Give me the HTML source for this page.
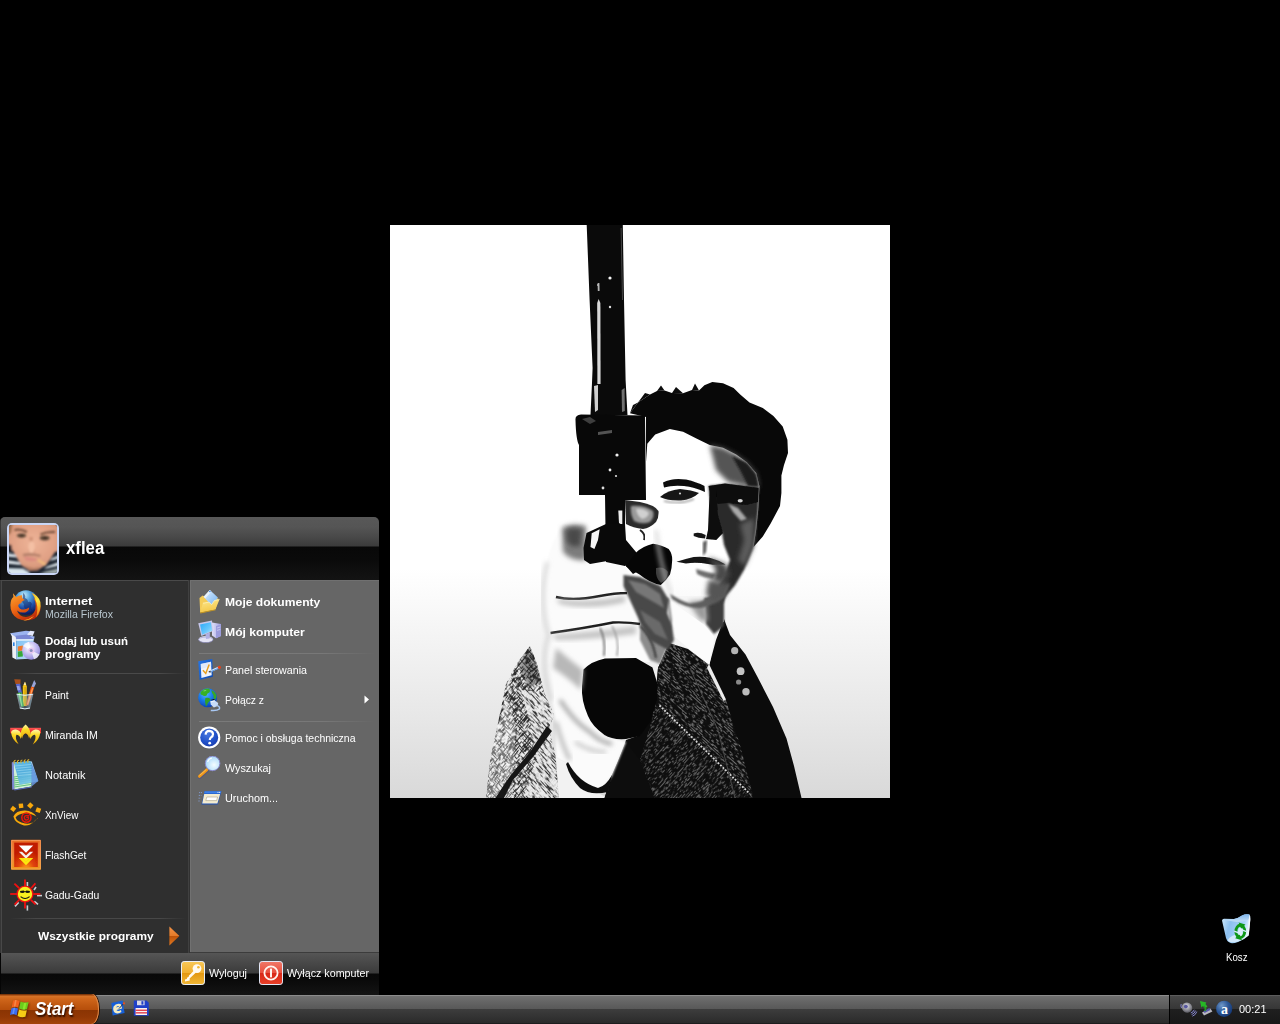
<!DOCTYPE html>
<html>
<head>
<meta charset="utf-8">
<title>Desktop</title>
<style>
html,body{margin:0;padding:0;}
body{width:1280px;height:1024px;overflow:hidden;position:relative;background:#000;font-family:"Liberation Sans",sans-serif;font-size:11px;color:#fff;}
.abs{position:absolute;}
svg{display:block;}
#photo{position:absolute;left:390px;top:225px;width:500px;height:573px;}
/* start menu: page coords via wrapper at 0,0 */
#sm{position:absolute;left:0;top:0;width:1280px;height:1024px;pointer-events:none;}
#smbox{position:absolute;left:0px;top:517px;width:379px;height:478px;border-radius:5px 5px 0 0;overflow:hidden;background:#0d0d0d;}
#smhead{position:absolute;left:0;top:0;width:379px;height:63px;background:linear-gradient(to bottom,#585858 0px,#555 10px,#4a4a4a 19px,#3b3b3b 29px,#080808 30px,#0a0a0a 42px,#131313 62px,#131313 63px);box-shadow:inset 1px 0 0 rgba(0,0,0,0.35);}
#smleft{position:absolute;left:0px;top:63px;width:188px;height:373px;background:#2f2f2f;border-top:1px solid #4a4a4a;border-left:1px solid #363636;box-sizing:border-box;box-shadow:inset 1px 0 0 #484848;}
#smdiv{position:absolute;left:188px;top:63px;width:2px;height:373px;background:linear-gradient(to right,#404040 0,#404040 1px,#323232 1px,#323232 2px);}
#smright{position:absolute;left:190px;top:63px;width:189px;height:373px;background:#666666;border-top:1px solid #707070;border-bottom:1px solid #3c3c3c;box-sizing:border-box;box-shadow:inset 1px 0 0 #717171;}
#smfoot{position:absolute;left:0;top:436px;width:379px;height:42px;background:linear-gradient(to bottom,#565656 0px,#505050 4px,#3b3b3b 20px,#080808 21px,#090909 26px,#141414 42px);box-shadow:inset 1px 0 0 #050505;}
.t{position:absolute;white-space:nowrap;line-height:13px;height:13px;color:#fff;font-size:11px;transform-origin:0 50%;}
.b{font-weight:bold;}
.sep{position:absolute;height:1px;}
.ic{position:absolute;}
/* taskbar */
#tb{position:absolute;left:0;top:995px;width:1280px;height:29px;background:linear-gradient(to bottom,#8c8c8c 0px,#8c8c8c 1px,#707070 1px,#6a6a6a 4px,#585858 14px,#3d3d3d 14px,#2b2b2b 28px,#1e1e1e 28px,#1e1e1e 29px);}
#tray{position:absolute;left:1169px;top:0;width:111px;height:29px;background:linear-gradient(to bottom,#5c5c5c 0px,#5c5c5c 1px,#474747 1px,#363636 14px,#1f1f1f 14px,#181818 29px);border-left:1px solid #000;box-sizing:border-box;}
#startbtn{position:absolute;left:-14px;top:-1px;width:113px;height:30px;border-radius:0 7px 7px 0 / 0 15px 15px 0;background:linear-gradient(to bottom,#5e2604 0px,#a04a12 1px,#d67226 2.5px,#cf661b 5px,#c05811 11px,#b64e0b 16px,#8a3403 16px,#923805 23px,#a2440a 30px);overflow:hidden;box-shadow:inset -1px 0 0 #e28a48, 1px 0 0 #2a1204;}
</style>
</head>
<body>

<!-- PHOTO -->
<svg id="photo" viewBox="390 225 500 573">
<defs>
<linearGradient id="pbg" x1="0" y1="0" x2="0" y2="1">
<stop offset="0" stop-color="#ffffff"/><stop offset="0.6" stop-color="#ffffff"/><stop offset="0.72" stop-color="#f4f4f4"/><stop offset="0.86" stop-color="#e7e7e7"/><stop offset="1" stop-color="#d9d9d9"/>
</linearGradient>
<filter id="bl05" x="-10%" y="-10%" width="120%" height="120%"><feGaussianBlur stdDeviation="0.6"/></filter>
<filter id="bl1" x="-20%" y="-20%" width="140%" height="140%"><feGaussianBlur stdDeviation="1.2"/></filter>
<filter id="bl2" x="-20%" y="-20%" width="140%" height="140%"><feGaussianBlur stdDeviation="2.5"/></filter>
<filter id="bl4" x="-30%" y="-30%" width="160%" height="160%"><feGaussianBlur stdDeviation="4"/></filter>
<pattern id="tweedD" width="7" height="7" patternUnits="userSpaceOnUse" patternTransform="rotate(40)"><rect width="7" height="7" fill="#111"/><path d="M0 1.2H7M0 4.6H7" stroke="#505050" stroke-width="0.9"/></pattern>
<pattern id="tweedD2" width="7" height="7" patternUnits="userSpaceOnUse" patternTransform="rotate(-50)"><rect width="7" height="7" fill="#121212"/><path d="M0 1.2H7M0 4.6H7" stroke="#4a4a4a" stroke-width="0.9"/></pattern>
<pattern id="tweedL" width="5" height="5" patternUnits="userSpaceOnUse" patternTransform="rotate(-55)"><rect width="5" height="5" fill="#ececec"/><path d="M0 1H5M0 3.5H5" stroke="#4a4a4a" stroke-width="0.85"/></pattern>
<pattern id="tweedL2" width="5" height="5" patternUnits="userSpaceOnUse" patternTransform="rotate(50)"><rect width="5" height="5" fill="#f0f0f0"/><path d="M0 1H5M0 3.5H5" stroke="#5a5a5a" stroke-width="0.8"/></pattern>
<linearGradient id="slv" x1="0" y1="0" x2="0" y2="1"><stop offset="0" stop-color="#fff" stop-opacity="0"/><stop offset="1" stop-color="#fff" stop-opacity="0.35"/></linearGradient>
<filter id="spk" x="0" y="0" width="100%" height="100%"><feTurbulence type="fractalNoise" baseFrequency="0.11 0.75" numOctaves="2" seed="7" result="n"/><feColorMatrix in="n" type="matrix" values="0 0 0 0 0  0 0 0 0 0  0 0 0 0 0  7 0 0 0 -3.55" result="a"/><feComposite in="SourceGraphic" in2="a" operator="in"/></filter>
<filter id="spk2" x="0" y="0" width="100%" height="100%"><feTurbulence type="fractalNoise" baseFrequency="0.13 0.8" numOctaves="2" seed="23" result="n"/><feColorMatrix in="n" type="matrix" values="0 0 0 0 0  0 0 0 0 0  0 0 0 0 0  7 0 0 0 -3.4" result="a"/><feComposite in="SourceGraphic" in2="a" operator="in"/></filter>
<filter id="spk3" x="0" y="0" width="100%" height="100%"><feTurbulence type="fractalNoise" baseFrequency="0.2 0.95" numOctaves="2" seed="11" result="n"/><feColorMatrix in="n" type="matrix" values="0 0 0 0 0  0 0 0 0 0  0 0 0 0 0  7 0 0 0 -3.65" result="a"/><feComposite in="SourceGraphic" in2="a" operator="in"/></filter>
<clipPath id="cLap"><path d="M669,643 L688,649 L709,665 L726,700 L740,745 L754,800 L655,800 L640,760 L652,720 L657,684 L658,668 Z"/></clipPath>
<clipPath id="cSlv"><path d="M530,646 L537,664 L544,692 L554,715 L549,728 L556,758 L559,800 L486,800 L490,761 L497,728 L506,684 L518,662 Z"/></clipPath>
<clipPath id="cLap2"><path d="M655,800 L640,760 L652,720 L660,705 L750,795 L752,800 Z"/></clipPath>
<clipPath id="pclip"><rect x="390" y="225" width="500" height="573"/></clipPath>
</defs>
<rect x="390" y="225" width="500" height="573" fill="url(#pbg)"/>
<g id="figure" clip-path="url(#pclip)">
<!-- left sleeve light tweed -->
<g clip-path="url(#cSlv)">
<rect x="480" y="640" width="90" height="165" fill="#ededed"/>
<rect x="380" y="560" width="320" height="320" fill="#2a2a2a" filter="url(#spk2)" transform="rotate(-52 525 720)"/>
<g opacity="0.9"><path d="M520,690 L544,692 L554,715 L549,728 L556,758 L559,800 L522,800 L536,760 L530,720 Z" fill="#ededed"/>
<g clip-path="none"><rect x="380" y="560" width="320" height="320" fill="#2a2a2a" filter="url(#spk)" transform="rotate(48 540 745)" clip-path="none"/></g></g>
<path d="M530,646 L537,664 L541,682 L528,688 L519,664 Z" fill="#1c1c1c" opacity="0.4" filter="url(#bl1)"/>
<path d="M486,800 L490,761 L497,728 L506,700 L516,724 L512,800 Z" fill="#fff" opacity="0.3"/>
</g>
<path d="M547,726 L552,731 L533,757 L513,780 L503,800 L494,800 L510,776 L530,752 Z" fill="#161616" filter="url(#bl05)"/>
<!-- shirt cuff -->
<path d="M556,758 L568,764 L584,786 L604,796 L606,800 L559,800 Z" fill="#f2f2f2"/>
<!-- jacket: black body -->
<path d="M724,619 L730,635 L745.5,654.5 L757,676 L773,707 L786.5,738.5 L794,766 L802,800 L604,800 L611,777 L618,761 L626,740 L640,735 L655,700 L658,668 L669,643 L690,655 L709,666 L716,640 Z" fill="#0b0b0b"/>
<!-- tweed lapel -->
<g clip-path="url(#cLap)">
<rect x="630" y="640" width="130" height="165" fill="#0e0e0e"/>
<rect x="540" y="560" width="320" height="320" fill="#6e6e6e" filter="url(#spk3)" transform="rotate(42 700 720)"/>
<path d="M655,800 L640,760 L652,720 L660,705 L750,795 L752,800 Z" fill="#0e0e0e"/>
</g>
<g clip-path="url(#cLap)"><g clip-path="url(#cLap2)"><rect x="540" y="600" width="320" height="320" fill="#626262" filter="url(#spk3)" transform="rotate(-48 700 760)"/></g></g>
<path d="M604,800 L611,777 L618,761 L626,742 L640,760 L655,800 Z" fill="#0d0d0d"/>
<!-- lapel seam -->
<path d="M659.5,705.5 L749.5,793.5" stroke="#d8d8d8" stroke-width="1.8" stroke-dasharray="1.8 1.6" fill="none"/>
<path d="M690,668 L718,730 L735,798" stroke="#4a4a4a" stroke-width="1" fill="none"/>
<!-- tie pins -->
<g filter="url(#bl05)"><circle cx="734.7" cy="650.7" r="3.6" fill="#b4b4b4"/><circle cx="740.6" cy="671.2" r="3.9" fill="#c4c4c4"/><circle cx="738.6" cy="682" r="2.6" fill="#8a8a8a"/><circle cx="746" cy="691.8" r="3.7" fill="#bcbcbc"/></g>
<!-- neck -->
<path d="M669,596 L724,596 L724,622 L704,626 L672,604 Z" fill="#f6f6f6"/>
<path d="M704,598 L724,596 L724,626 L714,634 L706,624 Z" fill="#3c3c3c" filter="url(#bl1)"/>
<path d="M688,602 L706,600 L708,622 L700,620 Z" fill="#9a9a9a" filter="url(#bl2)"/>
<!-- shirt collar white -->
<path d="M671,601 L704.5,625 L714.5,637 L709.5,664.5 L689,649 L675,637 L667,617 Z" fill="#fcfcfc"/>
<path d="M709,664 L726,699.5 L723.5,701 L707,668 Z" fill="#ececec"/>
<!-- hand white base -->
<path d="M563,524 Q552,540 547,562 Q538,600 549,636 Q540,660 552,700 L556,722 L556,758 L568,764 L584,786 L600,792 L612,776 L626,742 L604,735 L583,700 L583.5,669.5 L605,658.5 L640,657 L650,640 L640,600 L626,566 L606,562 L586,560 L584,540 L586,526 Z" fill="#fbfbfb" filter="url(#bl1)"/>
<path d="M552,640 L600,600 L640,600 L660,640 L650,662 L600,660 L580,680 L560,700 Z" fill="#fbfbfb"/>
<!-- hand: lower fingers gray (pinky/ring) -->
<path d="M640,598 L669,598 L672,620 L669,643 L660,664 L650,660 L640,640 Z" fill="#8c8c8c" filter="url(#bl1)"/>
<path d="M645,606 Q660,615 668,640" stroke="#2a2a2a" stroke-width="2" fill="none" filter="url(#bl1)"/>
<path d="M640,626 Q652,636 656,658" stroke="#333" stroke-width="2" fill="none" filter="url(#bl1)"/>
<path d="M650,600 L668,600 L670,622 L660,612 Z" fill="#dcdcdc" filter="url(#bl1)"/>
<!-- grip bottom black -->
<path d="M583.5,669.5 Q592,661 605,658.5 L636,658 L652.5,667.5 L657.5,684 L657,700 L650,722 L640,736 L626,739 Q612,740 604.5,735 Q592,726 588,716 Q581,700 582,686 Z" fill="#060606"/>
<!-- wrist shadow curve -->
<path d="M568,762 Q578,782 598,788 Q606,786 612,775 L608,792 Q590,796 580,788 Q570,778 566,764 Z" fill="#111" filter="url(#bl05)"/>
<!-- hand shading -->
<path d="M556,648 Q570,660 583,670 L581,690 Q566,676 553,668 Z" fill="#b8b8b8" filter="url(#bl2)"/>
<path d="M560,700 Q574,722 590,732 Q600,742 612,744" stroke="#8a8a8a" stroke-width="3" fill="none" filter="url(#bl2)"/>
<path d="M556,722 Q562,745 570,760" stroke="#aaa" stroke-width="3" fill="none" filter="url(#bl2)"/>
<path d="M575,742 Q590,752 606,752" stroke="#b0b0b0" stroke-width="2.5" fill="none" filter="url(#bl2)"/>
<!-- finger diagonal dark band -->
<path d="M623.5,575 L640,577 L660.5,586 L669,600 L667,613 L672,626 L674,640 L668,650 L650,640 L640,622 L629,598 L623.5,586 Z" fill="#4a4a4a" filter="url(#bl1)"/>
<path d="M628,580 L645,584 L660,594 L664,608 L650,600 L636,592 Z" fill="#777" filter="url(#bl1)"/>
<path d="M640,610 L660,622 L668,640 L655,634 L645,622 Z" fill="#6a6a6a" filter="url(#bl1)"/>
<!-- finger separators -->
<path d="M556,597 Q573,601.5 600,596 Q615,593 627,593" stroke="#1e1e1e" stroke-width="2.4" fill="none" filter="url(#bl05)"/>
<path d="M550.5,633 Q586,628 613,622.5 Q628,622 640,624" stroke="#1e1e1e" stroke-width="2.4" fill="none" filter="url(#bl05)"/>
<path d="M556,599 Q590,604 625,596 L625,602 Q590,610 560,604 Z" fill="#bdbdbd" filter="url(#bl2)"/>
<path d="M552,635 Q590,632 636,626 L636,634 Q590,640 556,640 Z" fill="#c4c4c4" filter="url(#bl2)"/>
<path d="M600,628 Q606,640 604,656" stroke="#777" stroke-width="1.8" fill="none" filter="url(#bl1)"/>
<path d="M612,626 Q620,640 617,656" stroke="#999" stroke-width="1.5" fill="none" filter="url(#bl1)"/>
<!-- hand left outline faint -->
<path d="M547,562 Q538,600 549,636 Q540,660 552,700" stroke="#c4c4c4" stroke-width="2.5" fill="none" filter="url(#bl2)"/>
<!-- trigger finger fuzzy -->
<path d="M562,528 Q572,522 586,526 L586,560 Q572,562 563,552 Z" fill="#7c7c7c" filter="url(#bl2)"/>
<path d="M566,530 Q574,526 582,530 L580,546 Q572,548 567,542 Z" fill="#4a4a4a" filter="url(#bl2)"/>
<!-- gun: barrel -->
<path d="M586.7,225 L622.8,225 L624,300 L625.6,380 L627.5,415 L590.5,415 L592,383 L592.6,368 L589.6,300 Z" fill="#0a0a0a"/>
<path d="M598.6,299 L600.4,303 L600.6,384 L597.4,384 L597.2,303 Z" fill="#f0f0f0" opacity="0.9"/>
<path d="M597.6,283 L599.4,283 L599.6,291 L597.8,291 Z" fill="#ddd" opacity="0.8"/>
<path d="M620.6,228 L621.6,228 L623,300 L622,300 Z" fill="#555" opacity="0.8"/>
<path d="M594,386 L598,385 L598,410 L595,412 Z" fill="#f2f2f2" opacity="0.85"/>
<path d="M621.6,390 L624.6,388 L624.8,411 L622,412 Z" fill="#8a8a8a" opacity="0.8"/>
<!-- gun: cylinder + frame -->
<path d="M575.5,420 Q575,415 581,414.5 L645,415.5 L646,500 L625,500 L625,566 L606,562 L605,495 L579,495 L579,445 Q576,440 575.5,420 Z" fill="#080808"/>
<path d="M582,419 L590,417 L596,421 L590,424 Z" fill="#555" opacity="0.7"/>
<path d="M598,432 L612,430 L612,433 L598,435 Z" fill="#666" opacity="0.8"/>
<circle cx="610" cy="278" r="1.6" fill="#f4f4f4"/><circle cx="610" cy="307" r="1.2" fill="#e0e0e0"/><circle cx="598" cy="285" r="1" fill="#bbb"/>
<circle cx="617" cy="455" r="1.6" fill="#f0f0f0"/><circle cx="610" cy="470" r="1.4" fill="#f0f0f0"/><circle cx="616" cy="476" r="1.1" fill="#ddd"/><circle cx="603" cy="488" r="1.4" fill="#ddd"/>
<path d="M618.3,510.5 L622.3,510.5 L622.3,525 L619,523 Z" fill="#eee"/>
<!-- trigger guard -->
<path d="M606,524 L586.5,533 L583.5,548 L584,560 L590,564 L613,560 L626,566 L633,574 L640,570 L636,552 L626,540 L625,524 Z" fill="#090909"/>
<path d="M591.7,533.2 L599.7,529.2 L598,540 L594.4,549.1 L590.5,547 Z" fill="#f6f6f6"/>
<!-- thumb -->
<path d="M625,500 L640,502 Q655,505 658.5,511 Q659,518 656,522 Q650,528 643,529 Q633,528 626,524 Z" fill="#2c2c2c" filter="url(#bl05)"/>
<path d="M631,506 Q645,505 653,511 Q655,517 650,522 Q642,525 634,521 Q630,514 631,506 Z" fill="#9a9a9a" filter="url(#bl1)"/>
<path d="M636,509 Q644,508 649,513 Q648,518 642,519 Q637,516 636,509 Z" fill="#d0d0d0" filter="url(#bl1)"/>
<path d="M640,530 Q646,534 644,540" stroke="#222" stroke-width="2" fill="none" filter="url(#bl05)"/>
<!-- fingertip black blob -->
<path d="M626,566.5 L635.5,553 Q643,546 653,543.8 Q662,545 668.7,549 Q672.5,554 672.2,560 Q672,568 670,574.5 Q666,581 660.8,585 Q650,583 639.5,574.5 Z" fill="#060606"/>
<path d="M656,568 Q664,566 668,572 Q667,580 661,583 Q655,578 656,568 Z" fill="#3c3c3c" filter="url(#bl05)"/>
<!-- hair -->
<path d="M630,413.2 L638,402.6 L650,394.6 L657,391 L664.5,390.6 L672,393 L683,393.3 L692,390 L699,390.6 L704.4,385.3 L712.3,382 L723,383.3 L733.6,388 L740.2,394.6 L749.5,402.6 L762.8,407.9 L773.4,415.9 L782.7,426.5 L787.4,439.8 L788,453 L784,465 L781.4,475.6 L781.4,492.9 L780,506 L770.8,523.2 L762.8,536.5 L753.5,547.1 L756.2,529.8 L758.2,510 L758.8,499.5 L759.5,486.2 L756.2,473 L746.9,462.3 L736.2,454.4 L723,447.7 L709.7,445.1 L696.4,438.4 L683.1,431.8 L669.8,429.1 L655.2,434.4 L647.3,443.7 L646,462 L646,417 Z" fill="#080808"/>
<!-- hair wisps -->
<path d="M638,402.6 L645,393 L650,394.6 Z M657,391 L661,385.5 L664.5,390.6 Z M692,390 L695,383.5 L699,390.6 Z M672,393 L676,387 L683,393.3 Z M630,413.2 L633,405 L638,402.6 Z" fill="#0c0c0c"/>
<!-- forehead right shade -->
<path d="M709.7,445.1 L723,447.7 L736.2,454.4 L746.9,462.3 L756.2,473 L759.5,486.2 L745,486 L728,482 L716,470 Z" fill="#555" filter="url(#bl2)"/>
<path d="M732,456 L747,463 L756,474 L759,487 L748,486 L740,470 Z" fill="#1a1a1a" filter="url(#bl1)"/>
<!-- right face shadow big -->
<path d="M708.5,486 L725,484 L759.5,487 L758.8,499.5 L758.2,510 L756.2,529.8 L753.5,547 L744.2,569.7 L734.9,585.6 L725.6,596.2 L723,603 L716,592 L724,575 L730,560 L724,545 L722,533 L716,529 L712,515 Z" fill="#2b2b2b" filter="url(#bl1)"/>
<!-- right eye dark band -->
<path d="M708.5,486 L725,483.5 L758.5,488 L758,502 L746,505 L728,503 L713,504 Z" fill="#0a0a0a" filter="url(#bl05)"/>
<ellipse cx="740.2" cy="500.8" rx="2.6" ry="1.8" fill="#d8d8d8" filter="url(#bl05)"/>
<!-- cheek lighter streak -->
<path d="M728,503.5 L738,508 L747,519 L741,521 L733,512 Z" fill="#a8a8a8" filter="url(#bl1)"/>
<!-- cheek mid -->
<path d="M740,524 L754,518 L753.5,546 L745,566 L738,560 L744,540 Z" fill="#5c5c5c" filter="url(#bl2)"/>
<!-- nose shadow -->
<path d="M709.7,489 L716,489 L718,515 L723,533 L716.3,540 L706,539 L708,530 Z" fill="#0c0c0c" filter="url(#bl05)"/>
<path d="M693.7,533.5 Q699,531.5 705.7,535 L705,538.5 Q698,538 693.7,536 Z" fill="#151515" filter="url(#bl05)"/>
<path d="M703,542 L707,540 L706,552 L703,556 Z" fill="#555" filter="url(#bl1)"/>
<!-- left eye + brow -->
<path d="M663,482.5 Q672,477.5 686,479.5 Q697,482 704.5,486 L705,492 Q694,487 684,486 Q672,485 664,487.5 Z" fill="#0e0e0e" filter="url(#bl05)"/>
<path d="M660,497 Q668,490 680,489 Q692,490 699,493 Q692,499.5 681,500.5 Q668,501 660,497 Z" fill="#161616" filter="url(#bl05)"/>
<path d="M664,501 Q680,505 694,499" stroke="#999" stroke-width="1.5" fill="none" filter="url(#bl1)"/>
<circle cx="680" cy="493.5" r="1.1" fill="#ccc"/>
<!-- mouth -->
<path d="M676.5,561.7 Q685,559 693.7,557 Q702,556 709.7,557.7 Q718,560 725.6,564.4 Q716,565.5 708,564 Q696,562 686,563.5 Z" fill="#141414" filter="url(#bl05)"/>
<path d="M696,569 Q706,572 716,574 L713,579 Q704,578 697,574 Z" fill="#6e6e6e" filter="url(#bl1)"/>
<path d="M708,557 L726,564 L730,575 L722,584 L712,580 L716,570 Z" fill="#4a4a4a" filter="url(#bl2)"/>
<!-- chin/jaw shadow -->
<path d="M669.8,593.6 Q680,601 690,603.5 Q700,603 708,598 Q718,590 729.6,583 L725,597 Q712,606 700,608 Q684,608 672,599 Z" fill="#5e5e5e" filter="url(#bl1)"/>
<path d="M708.4,580 L729.6,583 L724,598 L712,602 L706,594 Z" fill="#555" filter="url(#bl2)"/>
<path d="M656,530 Q660,565 671,594" stroke="#cfcfcf" stroke-width="2.5" fill="none" filter="url(#bl2)"/>

</g>
</svg>

<!-- DESKTOP ICON -->
<svg class="abs" style="left:1220px;top:912px;" width="32" height="32" viewBox="0 0 32 32">
<defs><linearGradient id="kog" x1="0" y1="0" x2="1" y2="0.3"><stop offset="0" stop-color="#d4ecfc"/><stop offset="0.35" stop-color="#8cc0f0"/><stop offset="0.8" stop-color="#a8d4f8"/><stop offset="1" stop-color="#e8f4fc"/></linearGradient>
<linearGradient id="kog2" x1="0" y1="0" x2="0" y2="1"><stop offset="0" stop-color="#7cb4ec"/><stop offset="1" stop-color="#c4e0f8"/></linearGradient>
<filter id="kob"><feGaussianBlur stdDeviation="0.35"/></filter></defs>
<g filter="url(#kob)">
<path d="M2,8.6 Q2.4,7 4,6.8 L14,7 Q19,5.6 22,3.4 Q26,1.4 29.4,2.6 Q30.6,4 30.4,7 L28.8,23.6 Q24,28 18,30 Q12,32 9.6,30.6 Q6.6,29 6,26 Z" fill="url(#kog)"/>
<path d="M14,7 Q19,5.6 22,3.4 Q26,1.4 29.4,2.6 Q29.6,6 28,8 Q22,10.4 14,9.4 Q6,9 4,7 Z" fill="url(#kog2)"/>
<ellipse cx="17" cy="26" rx="9.4" ry="3.6" transform="rotate(-16 17 26)" fill="#d8ecfc" opacity="0.9"/>
<path d="M29.4,3 Q30.4,5 30.2,8 L28.6,23.4 Q28,18 28.6,10 Z" fill="#f4f8fc"/>
<ellipse cx="20.3" cy="19.4" rx="4.4" ry="6.2" fill="none" stroke="#109818" stroke-width="2.9"/>
<path d="M18.6,10.6 L25.4,12.6 L21.2,17 Z" fill="#109818"/>
<path d="M22,28.2 L15.2,26.2 L19.4,21.8 Z" fill="#109818"/>
<path d="M21.4,17.6 L26.4,19.6" stroke="#d8ecfc" stroke-width="1.3"/>
<path d="M19.2,21.2 L14.2,19.2" stroke="#d8ecfc" stroke-width="1.3"/>
<ellipse cx="20.3" cy="19.4" rx="2.2" ry="3.6" fill="#e4f2fc" opacity="0.85"/>
</g>
</svg>
<div class="t" style="transform:scaleX(0.8787);left:1225.5px;top:951px;">Kosz</div>

<!-- START MENU -->
<div id="sm">
<div id="smbox">
  <div id="smhead"></div>
  <div id="smleft"></div>
  <div id="smdiv"></div>
  <div id="smright"></div>
  <div id="smfoot"></div>
</div>
<!-- separators -->
<div class="sep" style="left:10px;top:673px;width:176px;background:linear-gradient(to right,#2f2f2f,#4a4a4a 15%,#4a4a4a 85%,#2f2f2f);"></div>
<div class="sep" style="left:10px;top:918px;width:176px;background:linear-gradient(to right,#2f2f2f,#484848 15%,#484848 85%,#2f2f2f);"></div>
<div class="sep" style="left:199px;top:653px;width:176px;background:linear-gradient(to right,#7a7a7a,#787878 70%,#666);"></div>
<div class="sep" style="left:199px;top:721px;width:176px;background:linear-gradient(to right,#7a7a7a,#787878 70%,#666);"></div>
<!-- avatar -->
<div id="avatar" class="abs" style="left:7px;top:523px;width:52px;height:52px;border-radius:5px;background:#c9d6f6;overflow:hidden;">
<svg class="abs" style="left:2px;top:2px;border-radius:2px;" width="48" height="48" viewBox="0 0 48 48">
<defs><filter id="ab"><feGaussianBlur stdDeviation="1.3"/></filter><filter id="ab2"><feGaussianBlur stdDeviation="0.8"/></filter>
<radialGradient id="avs" cx="0.5" cy="0.42" r="0.7"><stop offset="0" stop-color="#eeb498"/><stop offset="0.6" stop-color="#e0a084"/><stop offset="1" stop-color="#c98a6c"/></radialGradient>
<clipPath id="avc"><rect width="48" height="48"/></clipPath></defs>
<g clip-path="url(#avc)">
<rect width="48" height="48" fill="#1c2430"/>
<g filter="url(#ab)">
<path d="M-3,-3 L51,-3 L51,26 L46,27 L38,39 L29,45 L20,45.5 L12,40 L2.5,23.5 L-3,20 Z" fill="url(#avs)"/>
<path d="M-3,-3 L4,-3 L2,8 L-3,12 Z" fill="#a07050"/>
<path d="M-3,19 L2.5,20 L3,27 L-3,27 Z" fill="#22242c"/>
<path d="M-3,28 L6,29.5 L8,32.5 L-3,31.5 Z" fill="#dfe7ee"/>
<path d="M-3,35 L10,37 L12,40 L-3,38.5 Z" fill="#e4ecf2"/>
<path d="M-3,43 L14,43.5 L19,46.5 L22,50 L-3,50 Z" fill="#d8e6ee"/>
<path d="M50,30 L43,33 L41,36 L50,33.5 Z" fill="#c8d0d6"/>
<path d="M50,37 L38,41.5 L35,44 L50,40.5 Z" fill="#dde5ea"/>
<path d="M50,43 L36,46.5 L30,49 L50,49 Z" fill="#9aa6a6"/>
<path d="M20,12 Q22,20 19,26 Q22,28 26,27 Q23,20 24,12 Z" fill="#c8886c" opacity="0.7"/>
<ellipse cx="22.5" cy="22" rx="3.2" ry="6" fill="#f4c0a4"/>
<path d="M13.5,29 Q22,26.5 32,30 L31,32 Q22,30 14.5,31.5 Z" fill="#b4806a"/>
<path d="M14.7,32 Q22,31 30,34.4 Q24,37.4 17,35.4 Z" fill="#dc8c80"/>
<path d="M15,40 Q22,45 31,42 L29,45.5 L20,46 Z" fill="#b07a62"/>
</g>
<g filter="url(#ab2)">
<path d="M5.5,5 Q11,3.4 17.8,7" stroke="#6e4c38" stroke-width="2" fill="none"/>
<path d="M31.5,9.4 Q38,6.4 46,7" stroke="#6e4c38" stroke-width="2" fill="none"/>
<ellipse cx="12.5" cy="10.6" rx="4.6" ry="2.1" fill="#5e4a38"/>
<ellipse cx="35.7" cy="13.1" rx="5" ry="2.3" fill="#5e4a38"/>
<ellipse cx="12.8" cy="10.5" rx="1.6" ry="1.3" fill="#3c2c20"/>
<ellipse cx="36" cy="13" rx="1.7" ry="1.4" fill="#3c2c20"/>
<path d="M29,34 L37,38.6 L35.6,40.4 L28.4,35.8 Z" fill="#f2c07c"/>
</g>
</g>
</svg>
</div>
<div class="t b" id="uname" style="transform:scaleX(0.9310);left:66px;top:537px;font-size:18px;line-height:22px;height:22px;">xflea</div>

<!-- left text -->
<div class="t b" style="transform:scaleX(1.1749);left:45.1px;top:595px;">Internet</div>
<div class="t" style="transform:scaleX(0.9590);left:45.1px;top:608px;color:#b9c7cf;">Mozilla Firefox</div>
<div class="t b" style="transform:scaleX(1.0446);left:45.1px;top:635px;">Dodaj lub usuń</div>
<div class="t b" style="transform:scaleX(1.0936);left:45.1px;top:648px;">programy</div>
<div class="t" style="transform:scaleX(0.9450);left:45.1px;top:689px;">Paint</div>
<div class="t" style="transform:scaleX(0.9576);left:45.1px;top:729px;">Miranda IM</div>
<div class="t" style="transform:scaleX(1.0010);left:45.1px;top:769px;">Notatnik</div>
<div class="t" style="transform:scaleX(0.9000);left:45.1px;top:809px;">XnView</div>
<div class="t" style="transform:scaleX(0.9252);left:45.1px;top:849px;">FlashGet</div>
<div class="t" style="transform:scaleX(0.9429);left:45.1px;top:889px;">Gadu-Gadu</div>
<div class="t b" style="transform:scaleX(1.0805);left:38px;top:930px;">Wszystkie programy</div>
<svg class="ic" style="left:168px;top:926px;" width="13" height="20" viewBox="0 0 13 20"><defs><linearGradient id="ag" x1="0" y1="0" x2="0" y2="1"><stop offset="0" stop-color="#f49448"/><stop offset="0.5" stop-color="#e47a28"/><stop offset="0.5" stop-color="#bc5208"/><stop offset="1" stop-color="#e07a24"/></linearGradient></defs><path d="M1.4,0.4 L11.4,10 L1.4,19.6 Z" fill="url(#ag)"/></svg>
<!-- right text -->
<div class="t b" style="transform:scaleX(1.0980);left:224.9px;top:596px;">Moje dokumenty</div>
<div class="t b" style="transform:scaleX(1.1050);left:224.9px;top:626px;">Mój komputer</div>
<div class="t" style="transform:scaleX(0.9717);left:224.9px;top:664px;">Panel sterowania</div>
<div class="t" style="transform:scaleX(0.9380);left:224.9px;top:694px;">Połącz z</div>
<svg class="ic" style="left:364px;top:695px;" width="6" height="9" viewBox="0 0 6 9"><path d="M0.5,0.5 L5,4.5 L0.5,8.5 Z" fill="#fff"/></svg>
<div class="t" style="transform:scaleX(0.9528);left:224.9px;top:732px;">Pomoc i obsługa techniczna</div>
<div class="t" style="transform:scaleX(0.9794);left:224.9px;top:762px;">Wyszukaj</div>
<div class="t" style="transform:scaleX(0.9852);left:224.9px;top:792px;">Uruchom...</div>
<!-- footer -->
<div class="t" style="transform:scaleX(0.9736);left:209px;top:967px;">Wyloguj</div>
<div class="t" style="transform:scaleX(0.9731);left:287px;top:967px;">Wyłącz komputer</div>
<!-- Firefox -->
<svg class="ic" style="left:10px;top:590px;" width="32" height="32" viewBox="0 0 32 32">
<defs>
<radialGradient id="ffg" cx="0.42" cy="0.2" r="0.8"><stop offset="0" stop-color="#c4ecfc"/><stop offset="0.3" stop-color="#5aa8e0"/><stop offset="0.65" stop-color="#1f4fa8"/><stop offset="1" stop-color="#0a1858"/></radialGradient>
<linearGradient id="fft" x1="0.1" y1="0" x2="0.7" y2="1"><stop offset="0" stop-color="#f8a030"/><stop offset="0.45" stop-color="#ee6a14"/><stop offset="1" stop-color="#b82408"/></linearGradient>
<linearGradient id="ffy" x1="0" y1="0" x2="0.3" y2="1"><stop offset="0" stop-color="#f8b020"/><stop offset="0.45" stop-color="#fce83c"/><stop offset="1" stop-color="#f08818"/></linearGradient>
<filter id="ffb"><feGaussianBlur stdDeviation="0.35"/></filter>
</defs>
<g filter="url(#ffb)">
<circle cx="16" cy="12.5" r="12.3" fill="url(#ffg)"/>
<path d="M13,3 Q16,5 15,8 Q18,9 18,12 Q21,11 22,14 Q20,17 22,20 Q18,22 16,19 Q13,18 14,14 Q11,12 13,9 Z" fill="#10286c" opacity="0.55"/>
<path d="M3,3.3 L6.2,7 Q9,5 12.2,5.4 Q11.2,8 14.8,10 Q11.5,10.8 11,13.2 Q8.4,13.4 8.2,16 Q9.5,19.8 14,19.6 Q17,19 19.2,17.6 Q19.4,21 15.2,22.4 Q10.5,23.3 7,20.4 Q9,26.4 16,27 Q23,26.6 25.4,19.6 Q26.6,13 23.6,8 Q28.6,10.6 30.4,16.6 Q31.2,24.6 24.4,28.8 Q16,32.4 7.6,28.6 Q0.2,24 0.4,15 Q0.6,9.2 3.4,7 Z" fill="url(#fft)"/>
<path d="M21.6,2.8 Q28,5 30.4,12 Q31.8,20 26,27.4 Q28.4,20 26.6,13 Q25,7 21.6,2.8 Z" fill="url(#ffy)"/>
<path d="M24,26 Q20,30.5 13,30.6 Q20,29 24,26 Z" fill="#f8c838"/>
</g>
</svg>
<!-- Add/Remove programs -->
<svg class="ic" style="left:10px;top:630px;" width="32" height="32" viewBox="0 0 32 32">
<defs>
<linearGradient id="arf" x1="0" y1="0" x2="1" y2="1"><stop offset="0" stop-color="#7cc0f4"/><stop offset="1" stop-color="#c4e0f8"/></linearGradient>
<radialGradient id="arc" cx="0.4" cy="0.35" r="0.7"><stop offset="0" stop-color="#ffffff"/><stop offset="0.5" stop-color="#c8c0f4"/><stop offset="1" stop-color="#8c84d8"/></radialGradient>
<filter id="arb"><feGaussianBlur stdDeviation="0.3"/></filter>
</defs>
<g filter="url(#arb)">
<path d="M0.3,3.2 L16,0.8 L24.4,1.8 L19,5.6 L24.6,6.6 L24,9.4 L6.2,9.4 L2,6.2 Z" fill="#9cb4f0"/>
<path d="M5.4,5.8 L17.4,4.6 L19,5.6 L24,9.2 L6.4,9.4 Z" fill="#7a88d4"/>
<path d="M17,4.4 L20.4,0.8 L24.6,1.6 L22.6,6 Z" fill="#e4e8fc"/>
<path d="M0.3,3.2 L5.6,7 L6.2,9.4 L6.2,29.6 L2.4,27.6 L1.8,6 Z" fill="#eef0f6"/>
<path d="M6.2,9.2 L23.6,9.2 L23.4,28.4 L6.2,29.6 Z" fill="url(#arf)"/>
<path d="M6.2,9.2 L23.6,9.2 L23.6,10.6 L6.2,10.8 Z" fill="#f4f8fc"/>
<path d="M7.8,16.6 L12.8,15.6 L12.8,20.6 L7.8,21.2 Z" fill="#f0782c"/>
<path d="M7.8,21.6 L12.8,21 L12.8,26.4 L7.8,27 Z" fill="#38a838"/>
<rect x="3" y="12.4" width="1.6" height="3.6" fill="#2a84e4"/>
<circle cx="21.2" cy="20.6" r="9.1" fill="url(#arc)"/>
<path d="M21.2,20.6 L13,16 A9.1,9.1 0 0 1 19,11.8 Z" fill="#fff" opacity="0.75"/>
<path d="M21.2,20.6 L29.6,24.4 A9.1,9.1 0 0 1 24,29.2 Z" fill="#fff" opacity="0.7"/>
<circle cx="21.2" cy="20.6" r="3" fill="#e8c8f0"/>
<circle cx="21.2" cy="20.6" r="1.5" fill="#8890c0"/>
</g>
</svg>
<!-- Paint -->
<svg class="ic" style="left:10px;top:679px;" width="32" height="32" viewBox="0 0 32 32">
<defs><filter id="pab"><feGaussianBlur stdDeviation="0.3"/></filter>
<linearGradient id="pag" x1="0" y1="0" x2="1" y2="0"><stop offset="0" stop-color="#d8f0fc" stop-opacity="0.6"/><stop offset="0.5" stop-color="#88c8f0" stop-opacity="0.22"/><stop offset="1" stop-color="#c8e8fc" stop-opacity="0.6"/></linearGradient></defs>
<g filter="url(#pab)">
<path d="M4.2,0.2 L10.6,0.4 L10.4,5 L5.6,5.2 Z" fill="#a8501c"/>
<path d="M5.8,5 L10.2,4.8 L12.2,15 L9,15.6 Z" fill="#5868d0"/>
<path d="M6.6,7 L9.4,7 L10.2,11 L7.6,11.4 Z" fill="#98a4ec"/>
<path d="M15,2.8 L16.8,7.6 L16.6,27 L12.8,27 L12.8,7.6 Z" fill="#f4c418"/>
<path d="M15,2.8 L16.2,6 L13.6,6 Z" fill="#f8e8b0"/>
<path d="M14.6,8 L15.6,8 L15.6,27 L14.6,27 Z" fill="#c89408"/>
<path d="M24.2,1 L26,4.4 L24,8.6 L21.4,7.8 Z" fill="#98a4d8"/>
<path d="M21.2,7.6 L24.2,8.6 L18.4,26.6 L15.8,26 Z" fill="#f05c14"/>
<path d="M22,9 L23.2,9.4 L18,25.6 L17,25.4 Z" fill="#fca060"/>
<path d="M7.4,14 L11.4,13.2 L14,27.4 L11.2,27.8 Z" fill="#30a030"/>
<path d="M8.6,14.2 L9.8,14 L12.4,27 L11.4,27.2 Z" fill="#88d868"/>
<path d="M6.6,15.2 L23.2,15.2 L20,29.2 Q15,30.6 9.8,29.2 Z" fill="url(#pag)"/>
<path d="M6.6,15.2 Q15,17.4 23.2,15.2" stroke="#e8f8ff" stroke-width="0.9" fill="none"/>
<path d="M9.8,29 Q15,30.8 20,29" stroke="#e8f8ff" stroke-width="1" fill="none"/>
</g>
</svg>
<!-- Miranda -->
<svg class="ic" style="left:10px;top:719px;" width="32" height="32" viewBox="0 0 32 32">
<defs><linearGradient id="mig" x1="0" y1="0" x2="0" y2="1"><stop offset="0" stop-color="#fff8b0"/><stop offset="0.35" stop-color="#fcdc28"/><stop offset="1" stop-color="#e8a808"/></linearGradient>
<linearGradient id="mir" x1="0" y1="0" x2="0" y2="1"><stop offset="0" stop-color="#fc5858"/><stop offset="1" stop-color="#e01010"/></linearGradient>
<filter id="mib"><feGaussianBlur stdDeviation="0.3"/></filter></defs>
<g filter="url(#mib)">
<rect x="0.2" y="8.8" width="30.8" height="5.6" fill="url(#mir)"/>
<path d="M15.6,5.4 Q19.6,8.6 20.4,13.6 Q20.6,17 19,19.6 Q18.6,15.6 15.6,14.2 Q12.6,15.6 12.2,19.6 Q10.6,17 10.8,13.6 Q11.6,8.6 15.6,5.4 Z" fill="url(#mig)"/>
<path d="M1,13.2 Q2,10.4 6,10.6 Q10.6,11.4 11.4,16 Q11.6,18.6 10.8,20 Q9.4,15.8 6.4,15.8 Q4.6,19 8.6,25.2 Q2,21 1,13.2 Z" fill="url(#mig)"/>
<path d="M30.4,13.2 Q29.4,10.4 25.4,10.6 Q20.8,11.4 20,16 Q19.8,18.6 20.6,20 Q22,15.8 25,15.8 Q26.8,19 22.8,25.6 Q29.4,21 30.4,13.2 Z" fill="url(#mig)"/>
</g>
</svg>

<!-- Notatnik -->
<svg class="ic" style="left:10px;top:759px;" width="32" height="32" viewBox="0 0 32 32">
<defs><linearGradient id="nog" x1="0" y1="0" x2="0.4" y2="1"><stop offset="0" stop-color="#58b8e8"/><stop offset="0.5" stop-color="#48a8dc"/><stop offset="1" stop-color="#78c8e8"/></linearGradient>
<linearGradient id="nog2" x1="0" y1="0" x2="1" y2="1"><stop offset="0" stop-color="#a8d8f8"/><stop offset="1" stop-color="#5890e0"/></linearGradient>
<filter id="nob"><feGaussianBlur stdDeviation="0.3"/></filter></defs>
<g filter="url(#nob)">
<path d="M1.8,3.4 L4,2.4 L4.6,30.2 L2.2,30.8 Z" fill="#7c88d4"/>
<path d="M3.8,3.6 L20.4,2.2 L21.6,27.4 L4.4,30.4 Z" fill="#d0f0d8"/>
<path d="M4,18 L20.8,15 M4,20 L21,17 M4,22 L21,19.2 M4.2,24 L21.2,21.2 M4.2,26 L21.4,23.4 M4.2,28 L21.4,25.4" stroke="#58c070" stroke-width="0.9"/>
<path d="M3.8,3.6 L20.4,2.2 L27.8,22.4 L9.8,25.8 Z" fill="url(#nog)" opacity="0.93"/>
<path d="M5,7 L21.6,5.4 M5.8,9.4 L22.4,7.8 M6.6,11.8 L23.2,10.2 M7.4,14.2 L24,12.6 M8.2,16.6 L24.8,15" stroke="#a8e0f4" stroke-width="0.7" opacity="0.8"/>
<path d="M20.4,2.2 L21.8,2.6 L28.4,22 L27.8,22.4 Z" fill="url(#nog2)"/>
<path d="M21.6,4 L28.2,22 L21.6,27.4 Z" fill="#6898e0" opacity="0.85"/>
<path d="M4.4,30.4 L21.6,27.4 L21.6,28.6 L4.4,31.4 Z" fill="#5868c0"/>
<g fill="none" stroke="#d8b030" stroke-width="1.1"><path d="M4.6,4.6 Q3,1.6 5.6,1.4"/><path d="M8,4.4 Q6.4,1.4 9,1.2"/><path d="M11.4,4.2 Q9.8,1.2 12.4,1"/><path d="M14.8,4 Q13.2,1 15.8,0.8"/><path d="M18.2,3.8 Q16.6,0.8 19.2,0.6"/></g>
</g>
</svg>
<!-- XnView -->
<svg class="ic" style="left:10px;top:799px;" width="32" height="32" viewBox="0 0 32 32">
<defs><filter id="xnb"><feGaussianBlur stdDeviation="0.3"/></filter></defs>
<g filter="url(#xnb)">
<rect x="1" y="7.6" width="4.4" height="4.4" transform="rotate(38 3.2 9.8)" fill="#f8a808"/>
<rect x="8.8" y="4.6" width="4.4" height="4.4" transform="rotate(-6 11 6.8)" fill="#f8a808"/>
<rect x="18" y="4.2" width="4.6" height="4.6" transform="rotate(42 20.3 6.5)" fill="#f8a808"/>
<rect x="26" y="8.8" width="4.6" height="4.6" transform="rotate(20 28.3 11.1)" fill="#f8a808"/>
<path d="M3.4,17.6 Q6,11.4 15,11.6 Q23,12 26.4,17.4 Q22,14.6 15,14.4 Q7.6,14.6 5.6,18.6 Q7,23 15,24.6 Q20,25.2 22.4,23.6 Q20,27 14,26.4 Q5,24.6 3.4,17.6 Z" fill="#f8a808"/>
<circle cx="16.4" cy="18.6" r="4.6" fill="none" stroke="#e01808" stroke-width="1.6"/>
<path d="M16.4,18.6 Q18.8,17 18.6,19.6 Q17.6,21.6 15.4,20.8 Q13.4,19.2 15,17 Q17,15.6 19.4,17" stroke="#e01808" stroke-width="1.3" fill="none"/>
<path d="M22.4,24 L28.4,18.6" stroke="#b87808" stroke-width="0.8" stroke-dasharray="1 1"/>
</g>
</svg>
<!-- FlashGet -->
<svg class="ic" style="left:10px;top:839px;" width="32" height="32" viewBox="0 0 32 32">
<defs><linearGradient id="fgo" x1="0" y1="0" x2="0" y2="1"><stop offset="0" stop-color="#e86c24"/><stop offset="0.5" stop-color="#f0843c"/><stop offset="1" stop-color="#f09818"/></linearGradient>
<radialGradient id="fgi" cx="0.5" cy="1.05" r="0.75"><stop offset="0" stop-color="#fc9c1c"/><stop offset="0.45" stop-color="#e04408"/><stop offset="1" stop-color="#c01a04"/></radialGradient>
<filter id="fgb"><feGaussianBlur stdDeviation="0.25"/></filter></defs>
<g filter="url(#fgb)">
<rect x="1" y="0.8" width="30" height="30" rx="0.8" fill="url(#fgo)"/>
<rect x="1.8" y="1.6" width="28.4" height="28.4" fill="none" stroke="#f8b078" stroke-width="0.7" opacity="0.8"/>
<rect x="4.2" y="3.6" width="23.6" height="24.4" fill="url(#fgi)"/>
<path d="M8.8,6.6 L23.2,6.6 L16,13.8 Z" fill="#ffffff"/>
<path d="M8.8,12.8 L12,12.8 L16,16.6 L20,12.8 L23.2,12.8 L16,19.8 Z" fill="#f4f0ec"/>
<path d="M8.8,19 L12,19 L16,22.6 L20,19 L23.2,19 L16,26.2 Z" fill="#fce808"/>
<path d="M11.6,19 L20.4,19 L16,23 Z" fill="#fce808"/>
</g>
</svg>
<!-- Gadu-Gadu -->
<svg class="ic" style="left:10px;top:879px;" width="33" height="32" viewBox="0 0 33 32">
<g stroke-linecap="butt">
<g stroke="#c8ccd0" stroke-width="1.6">
<path d="M17.4,3 L17.4,7"/><path d="M26,8 L24,11"/><path d="M27,16.6 L32,16.6"/><path d="M24.4,22.4 L28,25.4"/><path d="M17.4,26.4 L17.4,31.6"/><path d="M8.6,23.4 L5,27.4"/>
</g>
<g stroke="#f01010" stroke-width="1.8">
<path d="M15,0.4 L15,7"/><path d="M25.4,4.4 L21.4,9"/><path d="M23.4,15 L30.4,15"/><path d="M21,21 L25.6,25.4"/><path d="M15,23 L15,29.6"/><path d="M9,21 L4.6,25.6"/><path d="M0.2,15 L7,15"/><path d="M4.4,4.6 L9,9"/>
</g>
</g>
<circle cx="15" cy="15" r="8.6" fill="#f01010"/>
<circle cx="15" cy="15" r="7.2" fill="#f8f020"/>
<path d="M10,12 L13.6,11.4 L15,12.4 L16.6,11.4 L20,12 L19.6,13.8 L16.8,14 L15,13 L13.2,14 L10.4,13.8 Z" fill="#101010"/>
<path d="M10.6,17.6 Q15,21.4 19.6,17.6" stroke="#101010" stroke-width="1.1" fill="none"/>
</svg>

<!-- Moje dokumenty -->
<svg class="ic" style="left:198px;top:590px;" width="24" height="24" viewBox="0 0 24 24">
<defs><linearGradient id="mdf" x1="0" y1="0" x2="0.3" y2="1"><stop offset="0" stop-color="#fce890"/><stop offset="1" stop-color="#f4c848"/></linearGradient>
<linearGradient id="mdd" x1="0" y1="0" x2="1" y2="1"><stop offset="0" stop-color="#e8f4ff"/><stop offset="0.5" stop-color="#a8d0f8"/><stop offset="1" stop-color="#78b4f0"/></linearGradient>
<filter id="mdb"><feGaussianBlur stdDeviation="0.3"/></filter></defs>
<g filter="url(#mdb)">
<path d="M1.5,8 L4.6,5.4 L8,7.4 L20.4,8.4 L17.6,19 L2.2,22.4 Z" fill="#f4cc58"/>
<path d="M11.8,0.1 L19.9,7.4 L14,16 L5.6,6.8 Z" fill="url(#mdd)"/>
<path d="M11.8,0.1 L13.4,1.6 L7.2,8.4 L5.6,6.8 Z" fill="#f0f8ff" opacity="0.8"/>
<circle cx="11.9" cy="1.5" r="0.8" fill="#2880e8"/>
<path d="M4.9,13.2 L11,12.2 L13.6,14.6 L16.4,10.6 L21.5,9.4 L17.4,19.4 L2.1,22.6 Z" fill="url(#mdf)"/>
<path d="M4.9,13.2 L11,12.2 L13.6,14.6 L16.4,10.6 L21.5,9.4" stroke="#fff8c8" stroke-width="0.7" fill="none"/>
<path d="M2.1,22.6 L17.4,19.4 L17.6,20.2 L2.4,23.4 Z" fill="#c89820"/>
</g>
</svg>
<!-- Moj komputer -->
<svg class="ic" style="left:198px;top:620px;" width="24" height="24" viewBox="0 0 24 24">
<defs><linearGradient id="mks" x1="0" y1="0" x2="1" y2="1"><stop offset="0" stop-color="#28a8f8"/><stop offset="0.6" stop-color="#68c8fc"/><stop offset="1" stop-color="#b8e8fc"/></linearGradient>
<linearGradient id="mkt" x1="0" y1="0" x2="1" y2="0"><stop offset="0" stop-color="#e0e0f8"/><stop offset="1" stop-color="#a0a0e0"/></linearGradient>
<filter id="mkb"><feGaussianBlur stdDeviation="0.3"/></filter></defs>
<g filter="url(#mkb)">
<path d="M14,2.6 L23,4.1 L23,16 L18,18.2 L14,15.4 Z" fill="url(#mkt)"/>
<path d="M18,6 L23,4.4 L23,16 L18,18.2 Z" fill="#9c9cdc"/>
<path d="M19,8 L22.4,7 M19,10.4 L22.4,9.4" stroke="#c8c8f0" stroke-width="0.9"/>
<ellipse cx="7.8" cy="19.2" rx="7.2" ry="3.1" fill="#e4e4f4"/>
<ellipse cx="7.8" cy="19.8" rx="7.2" ry="2.8" fill="none" stroke="#9090c8" stroke-width="0.6"/>
<path d="M7.4,14 L12,12.6 L11.6,18.6 L8,19 Z" fill="#b0b0e4"/>
<path d="M0.25,3.2 L14,0.4 L14.9,11 L3.4,16 Z" fill="#c8c8ec"/>
<path d="M2.1,4.4 L12.75,2.25 L14.3,10.7 L4,14.75 Z" fill="url(#mks)"/>
</g>
</svg>
<!-- Panel sterowania -->
<svg class="ic" style="left:198px;top:658px;" width="24" height="24" viewBox="0 0 24 24">
<defs><linearGradient id="psf" x1="0" y1="0" x2="1" y2="1"><stop offset="0" stop-color="#2878e8"/><stop offset="1" stop-color="#0c48b0"/></linearGradient>
<filter id="psb"><feGaussianBlur stdDeviation="0.3"/></filter></defs>
<g filter="url(#psb)">
<path d="M0.25,3.2 L14.3,1 L14.9,18.8 L1.5,21.9 Z" fill="url(#psf)"/>
<path d="M2.75,6 L13,3.8 L13.7,17.25 L3.4,20 Z" fill="#f0f4fc"/>
<path d="M2.75,6 L13,3.8 L13.2,8 L3,11 Z" fill="#d8e4f8" opacity="0.7"/>
<path d="M4.9,12.25 L7.75,15.4 L11.2,6.6" stroke="#e8a020" stroke-width="1.5" fill="none"/>
<path d="M11.2,13.8 L21,9.4" stroke="#d0e4fc" stroke-width="2" />
<path d="M11.6,14.2 L21.2,9.9" stroke="#4088e0" stroke-width="0.8" />
<path d="M10.2,14 L12.4,12.6 L12.6,14.6 Z" fill="#403020"/>
<circle cx="21.4" cy="9.3" r="1.6" fill="#e84018"/>
</g>
</svg>
<!-- Polacz z -->
<svg class="ic" style="left:198px;top:688px;" width="24" height="24" viewBox="0 0 24 24">
<defs><radialGradient id="pzg" cx="0.4" cy="0.3" r="0.75"><stop offset="0" stop-color="#58b8fc"/><stop offset="0.5" stop-color="#1878e8"/><stop offset="1" stop-color="#0c3cb0"/></radialGradient>
<filter id="pzb"><feGaussianBlur stdDeviation="0.3"/></filter></defs>
<g filter="url(#pzb)">
<circle cx="9.6" cy="9.75" r="9.5" fill="url(#pzg)"/>
<path d="M2.6,4 Q6,0.6 10.6,0.6 Q13,2 11.4,4.4 Q9,5 8.6,7.4 Q6,9 4.4,7 Q2,7 2.6,4 Z" fill="#38b028"/>
<path d="M13.4,2 Q17,3.4 18.4,7 Q18.8,10 17,11.4 Q15,10 15.4,7 Q13.6,5 13.4,2 Z" fill="#38a828"/>
<path d="M7.4,10 Q10,9 12.6,11 Q12,13.6 9.8,15 Q9,17.6 8,18.6 Q7,15 7,12.6 Z" fill="#30a028"/>
<path d="M5,3 Q7,1.8 8.6,2.6 Q7,3.6 5,3 Z" fill="#b8f0b0" opacity="0.7"/>
<path d="M12.6,12 L16,11 L17.6,13 Z" fill="#101010"/>
<path d="M12.2,13.6 L16.4,12.2 L20.2,15 L19.6,18 L15.8,19.6 L12.8,16.4 Z" fill="#c8dcf8"/>
<path d="M12.2,13.6 L16.4,12.2 L17.4,13 L13.2,14.6 Z" fill="#eef4ff"/>
<path d="M18.6,17.4 Q22.4,18.6 21.4,21 Q19,23 12.8,22.4" stroke="#a8c8f4" stroke-width="1.5" fill="none"/>
</g>
</svg>
<!-- Pomoc -->
<svg class="ic" style="left:198px;top:726px;" width="24" height="24" viewBox="0 0 24 24">
<defs><radialGradient id="pog" cx="0.4" cy="0.3" r="0.8"><stop offset="0" stop-color="#4878e0"/><stop offset="0.6" stop-color="#2050c8"/><stop offset="1" stop-color="#1838a8"/></radialGradient></defs>
<circle cx="11.4" cy="11.9" r="11.3" fill="#404860" opacity="0.35"/>
<circle cx="11.2" cy="11.5" r="11.1" fill="#ffffff"/>
<circle cx="11.2" cy="11.5" r="9" fill="url(#pog)"/>
<path d="M7.6,8.6 Q7.8,4.8 11.4,4.8 Q15,5 15,8.2 Q15,10.2 12.8,11.6 Q11.8,12.4 11.8,14" stroke="#ffffff" stroke-width="2.2" fill="none"/>
<circle cx="11.7" cy="17.2" r="1.4" fill="#ffffff"/>
</svg>
<!-- Wyszukaj -->
<svg class="ic" style="left:198px;top:756px;" width="24" height="24" viewBox="0 0 24 24">
<defs><radialGradient id="wyg" cx="0.6" cy="0.6" r="0.7"><stop offset="0" stop-color="#f4fcff"/><stop offset="0.6" stop-color="#c0e4fc"/><stop offset="1" stop-color="#98ccf8"/></radialGradient>
<filter id="wyb"><feGaussianBlur stdDeviation="0.3"/></filter></defs>
<g filter="url(#wyb)">
<path d="M9.4,14.4 L1.6,21.4" stroke="#585878" stroke-width="3.4" stroke-linecap="round"/>
<path d="M9,13.6 L1.4,20.4" stroke="#f09818" stroke-width="2.8" stroke-linecap="round"/>
<path d="M8.4,13.4 L1.6,19.4" stroke="#f8c060" stroke-width="0.9"/>
<circle cx="14.6" cy="7.4" r="7.3" fill="url(#wyg)" stroke="#8888c8" stroke-width="1"/>
<path d="M9.6,6 Q10.4,2.6 14,2" stroke="#ffffff" stroke-width="1.2" fill="none" opacity="0.9"/>
</g>
</svg>
<!-- Uruchom -->
<svg class="ic" style="left:198px;top:786px;" width="24" height="24" viewBox="0 0 24 24">
<defs><filter id="urb"><feGaussianBlur stdDeviation="0.25"/></filter></defs>
<g filter="url(#urb)">
<path d="M1,6.6 L4,6.6 M0.8,9.4 L3.4,9.4 M0.6,12.2 L2.8,12.2 M0.4,15 L2.2,15" stroke="#8098c8" stroke-width="1" stroke-dasharray="1.2 0.8"/>
<path d="M6.6,5.2 L23.4,5.2 L19.8,18.6 L3.4,18.6 Z" fill="#1c50b8"/>
<path d="M6.6,5.2 L23.4,5.2 L22.8,7.4 L6,7.4 Z" fill="#3c80e8"/>
<path d="M6.2,8 L22.2,8 L19.4,17.4 L4.2,17.4 Z" fill="#f4ecd0"/>
<path d="M8.8,11 L19.6,11 L18.6,14.6 L7.8,14.6 Z" fill="#ffffff" stroke="#a8a088" stroke-width="0.6"/>
<circle cx="20" cy="6.3" r="0.6" fill="#e8f0ff"/><circle cx="21.6" cy="6.3" r="0.6" fill="#e8f0ff"/>
</g>
</svg>
<!-- Wyloguj -->
<svg class="ic" style="left:181px;top:961px;" width="24" height="24" viewBox="0 0 24 24">
<defs><linearGradient id="wlg" x1="0" y1="0" x2="0" y2="1"><stop offset="0" stop-color="#f8c858"/><stop offset="0.48" stop-color="#f0b030"/><stop offset="0.52" stop-color="#e49810"/><stop offset="1" stop-color="#f0b838"/></linearGradient></defs>
<rect x="0.5" y="0.5" width="23" height="23" rx="2.6" fill="url(#wlg)" stroke="#e8eef8" stroke-width="1"/>
<circle cx="16" cy="7.6" r="4.4" fill="#fffaf0"/>
<circle cx="17.4" cy="6.2" r="1.3" fill="#f0b838"/>
<path d="M13,9.4 L15,11.4 L8.6,17.6 L8.8,19.6 L4,20.4 L4,18.4 L5.8,18 L6.2,16.4 L7.6,16 L8,14.6 Z" fill="#fffaf0"/>
</svg>
<!-- Wylacz -->
<svg class="ic" style="left:259px;top:961px;" width="24" height="24" viewBox="0 0 24 24">
<defs><linearGradient id="wyl" x1="0" y1="0" x2="0" y2="1"><stop offset="0" stop-color="#f07868"/><stop offset="0.48" stop-color="#e85040"/><stop offset="0.52" stop-color="#d82818"/><stop offset="1" stop-color="#e84028"/></linearGradient></defs>
<rect x="0.5" y="0.5" width="23" height="23" rx="2.6" fill="url(#wyl)" stroke="#e0e8f8" stroke-width="1"/>
<circle cx="12" cy="12" r="6.6" fill="none" stroke="#fff4f0" stroke-width="1.8"/>
<rect x="11" y="7.6" width="2" height="8.8" fill="#fff4f0"/>
</svg>

</div>

<!-- TASKBAR -->
<div id="tb">
  <div id="tray"></div>
  <div id="startbtn"></div>
</div>
<div class="t b" id="starttxt" style="transform:scaleX(0.9655);left:34.5px;top:998px;font-size:17.5px;line-height:22px;height:22px;font-style:italic;text-shadow:1px 1.5px 1.5px rgba(40,10,0,0.9);">Start</div>
<!-- windows flag -->
<svg class="abs" style="left:10px;top:999px;" width="21" height="20" viewBox="0 0 21 20">
<defs><filter id="flb"><feGaussianBlur stdDeviation="0.35"/></filter><filter id="fls"><feGaussianBlur stdDeviation="0.8"/></filter></defs>
<g filter="url(#fls)" opacity="0.55" transform="translate(0.8,1)">
<path d="M3,1.6 Q6,0.2 9.6,2 L8.2,8.6 Q5,7 1.6,8.4 Z M10.6,2.6 Q14,4.4 18.6,3 L17,10.2 Q13,11.4 9.2,9.4 Z M1.4,9.4 Q4.6,8 8,9.6 L6.6,16.2 Q3.4,14.6 0,16 Z M9,10.4 Q12.6,12.2 16.8,11.2 L15.4,17.8 Q11.4,19 7.6,17 Z" fill="#2a1000"/>
</g>
<g filter="url(#flb)">
<path d="M3,1.6 Q6,0.2 9.6,2 L8.2,8.6 Q5,7 1.6,8.4 Z" fill="#f2601c"/>
<path d="M5,1 L6.6,1 L5.4,7.6 L3.8,7.8 Z" fill="#f89858" opacity="0.7"/>
<path d="M10.6,2.6 Q14,4.4 18.6,3 L17,10.2 Q13,11.4 9.2,9.4 Z" fill="#6ccc1c"/>
<path d="M14,4 L16.4,3.8 L15,10.4 L12.6,10.6 Z" fill="#98f030" opacity="0.7"/>
<path d="M1.4,9.4 Q4.6,8 8,9.6 L6.6,16.2 Q3.4,14.6 0,16 Z" fill="#3a6cf0"/>
<path d="M3.6,8.8 L5.2,8.8 L3.8,15 L2.2,15.2 Z" fill="#78a0f8" opacity="0.7"/>
<path d="M9,10.4 Q12.6,12.2 16.8,11.2 L15.4,17.8 Q11.4,19 7.6,17 Z" fill="#f6cc12"/>
</g>
</svg>
<!-- quick launch 1 -->
<svg class="abs" style="left:110px;top:1000px;" width="17" height="17" viewBox="0 0 17 17">
<defs><filter id="q1b"><feGaussianBlur stdDeviation="0.3"/></filter></defs>
<g filter="url(#q1b)">
<path d="M1.4,3 L12.6,0.6 L14.6,13 L2.6,15.6 Z" fill="#1860d8"/>
<path d="M10.6,4 Q6,2.6 3.6,6.6 Q2.4,10 4.6,12.6 Q8,14.6 11.4,12 L11,10 Q8,12 6.4,10 L12,8.4 Q12,5.6 10.6,4 Z M6,7.6 Q7,5.2 9.6,6.4 Z" fill="#f4ecc0" fill-rule="evenodd"/>
<path d="M9,8.6 L13.6,3.6" stroke="#183060" stroke-width="1"/>
<circle cx="14" cy="3.4" r="1.1" fill="#e85020"/>
</g>
</svg>
<!-- quick launch 2: floppy -->
<svg class="abs" style="left:133px;top:1000px;" width="17" height="17" viewBox="0 0 17 17">
<path d="M0.8,0.6 L13.6,0.6 L15.8,2.8 L15.8,15.8 L0.8,15.8 Z" fill="#2040c8"/>
<rect x="4" y="0.6" width="7.6" height="4.6" fill="#d8d8e4"/>
<rect x="8.4" y="1.2" width="2" height="3.4" fill="#2040c8"/>
<rect x="2.6" y="8" width="11.4" height="7" fill="#f8f4f4"/>
<rect x="2.6" y="9.6" width="11.4" height="1.3" fill="#e03040"/>
<rect x="2.6" y="12.2" width="11.4" height="1.3" fill="#e03040"/>
</svg>
<!-- tray icons -->
<svg class="abs" style="left:1180px;top:1001px;" width="18" height="18" viewBox="0 0 18 18">
<defs><radialGradient id="t1g" cx="0.4" cy="0.4" r="0.6"><stop offset="0" stop-color="#e8e8f0"/><stop offset="0.5" stop-color="#a0a0a8"/><stop offset="1" stop-color="#606068"/></radialGradient><filter id="t1b"><feGaussianBlur stdDeviation="0.3"/></filter></defs>
<g filter="url(#t1b)">
<ellipse cx="7" cy="6.6" rx="5.4" ry="5" transform="rotate(30 7 6.6)" fill="url(#t1g)"/>
<ellipse cx="5.8" cy="5.6" rx="2" ry="1.8" fill="#5858a0"/>
<path d="M1.2,3 Q0.4,5 1.6,7" stroke="#8888d8" stroke-width="0.9" fill="none"/>
<path d="M11.6,13.6 Q14.6,12.6 15.6,9.6 M12.4,15.2 Q15.8,14 16.8,10.6 M10.8,12 Q13.4,11.2 14.2,8.8" stroke="#9090e0" stroke-width="0.9" fill="none"/>
</g>
</svg>
<svg class="abs" style="left:1198px;top:1000px;" width="16" height="17" viewBox="0 0 16 17">
<defs><filter id="t2b"><feGaussianBlur stdDeviation="0.3"/></filter></defs>
<g filter="url(#t2b)">
<path d="M4,12.4 L12.4,8.4 L14.4,11.4 L6,15.6 Z" fill="#b8b8c0"/>
<path d="M5.4,11 L11.4,8 L12.4,10 L6.6,13 Z" fill="#5858a8"/>
<path d="M2,1 L8.4,2.4 L7.4,4 L9.4,6.4 L7,8.4 L5,6 L3.4,7.4 Z" fill="#28b828"/>
<path d="M5.6,6 L7.6,8.4 L7,11" stroke="#209820" stroke-width="1.6" fill="none"/>
</g>
</svg>
<svg class="abs" style="left:1215px;top:1000px;" width="18" height="18" viewBox="0 0 18 18">
<defs><radialGradient id="t3g" cx="0.35" cy="0.3" r="0.8"><stop offset="0" stop-color="#7098c8"/><stop offset="0.5" stop-color="#2c5898"/><stop offset="1" stop-color="#10306c"/></radialGradient></defs>
<circle cx="9.2" cy="8.8" r="8.1" fill="url(#t3g)"/>
<text x="9.6" y="13.6" font-family="Liberation Serif, serif" font-weight="bold" font-size="14" fill="#fff" text-anchor="middle">a</text>
</svg>
<div class="t" style="transform:scaleX(0.9989);left:1238.5px;top:1003px;">00:21</div>

</body>
</html>
